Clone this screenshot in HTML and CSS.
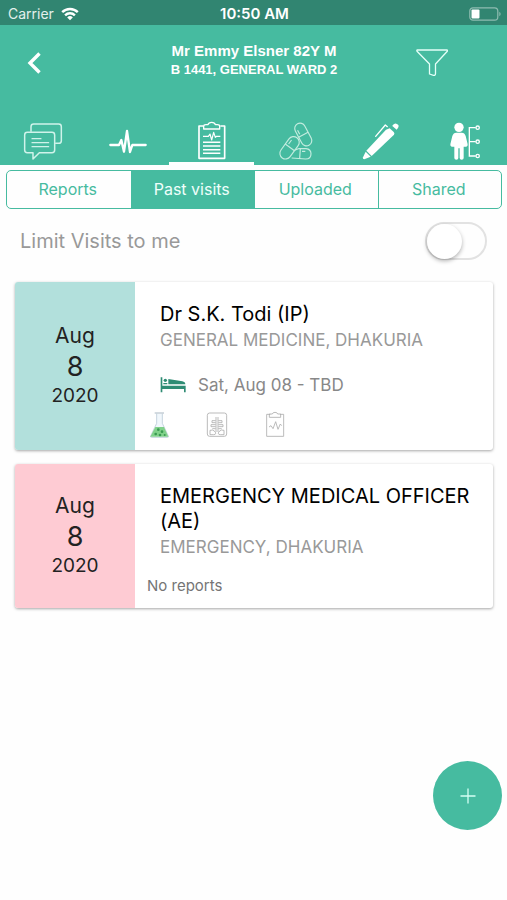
FILE: index.html
```html
<!DOCTYPE html>
<html lang="en">
<head>
<meta charset="utf-8">
<meta name="viewport" content="width=device-width, initial-scale=1">
<title>Past visits</title>
<link rel="stylesheet" href="styles.css">
</head>
<body>
<div class="status">
  <div class="carrier">
    <span>Carrier</span>
    <svg width="18" height="14" viewBox="0 0 18 14" fill="none" stroke="#fff" stroke-width="2.4">
      <path d="M1.2 5.2a11 11 0 0 1 15.600 0M4.100 8.300a7 7 0 0 1 9.800 0"/>
      <path d="M9 13.200 6.200 10.400a4 4 0 0 1 5.600 0z" fill="#fff" stroke="none"/>
    </svg>
  </div>
  <div class="clock">10:50 AM</div>
  <svg class="battery" width="32" height="14" viewBox="0 0 32 14">
    <rect x=".8" y=".8" width="28" height="12.400" rx="3.200" fill="none" stroke="#8fbcb1" stroke-width="1.200"/>
    <rect x="2.500" y="2.500" width="8" height="9" rx="1" fill="#fff"/>
    <path d="M30.300 4.800a2.500 2.500 0 0 1 0 4.400z" fill="#8fbcb1"/>
  </svg>
</div>

<header class="header">
  <div class="bar">
    <button class="icon-btn" type="button" aria-label="Back">
      <svg width="16" height="24" viewBox="0 0 16 24" fill="none" stroke="#fff" stroke-width="3.400"><path d="M13.500 2.500 4 12l9.500 9.500"/></svg>
    </button>
    <h1 class="patient">
      <span class="patient-name">Mr Emmy Elsner 82Y M</span>
      <span class="patient-ward">B 1441, GENERAL WARD 2</span>
    </h1>
    <button class="icon-btn" type="button" aria-label="Filter">
      <svg width="34" height="30" viewBox="0 0 34 30" fill="none" stroke="#e4fff8" stroke-width="1.300" stroke-linejoin="round"><path d="M2.300 2h29.600q.8 0 .4 1.200L20.500 16v9.500q0 2-2 1.800L14.500 26v-10L2 3.200Q1.500 2 2.300 2z"/></svg>
    </button>
  </div>
  <nav class="tabs">
    <a class="tab" href="#" aria-label="Messages">
      <svg viewBox="0 0 120 120" fill="none" stroke="#d0f3ea" stroke-width="4.500" stroke-linejoin="round" stroke-linecap="round">
        <path d="M27 31V17q0-8 8-8h75q8 0 8 8v42q0 8-8 8h-9"/>
        <path d="M16 34h74q8 0 8 8v45q0 8-8 8H52L33 114V95H16q-8 0-8-8V42q0-8 8-8z"/>
        <path d="M30 53h27M30 65h50M30 77h50" stroke-width="3.500"/>
      </svg>
    </a>
    <a class="tab" href="#" aria-label="Vitals">
      <svg viewBox="0 0 120 120" fill="none" stroke="#fff" stroke-width="7" stroke-linejoin="round" stroke-linecap="round"><path d="M10 72h26l7-15 8 35 9-62 9 63 7-21h40"/></svg>
    </a>
    <a class="tab tab-active" href="#" aria-label="Visits">
      <svg viewBox="0 0 120 120" fill="none" stroke="#fff" stroke-width="5" stroke-linejoin="round">
        <path d="M36 15H24v97h77V15H88"/>
        <path d="M38 24v-8q0-5 7-5h6q2-7 11-7t11 7h6q7 0 7 5v8z" stroke-width="4"/>
        <path d="M36 46h16l5-7 5 18 6-23 5 15 4-3h11" stroke-width="3.500"/>
        <path d="M36 64h52M36 75h52M36 86h52M36 97h52" stroke-width="4.500"/>
      </svg>
    </a>
    <a class="tab" href="#" aria-label="Medication">
      <svg viewBox="0 0 120 120" fill="none" stroke="#c3ecdf" stroke-width="3.500">
        <g transform="rotate(-28 82 41)"><rect x="66" y="4" width="32" height="73" rx="16"/><path d="M66 41h32M73 21v14"/></g>
        <g transform="rotate(36 41 80)"><rect x="24" y="43" width="34" height="75" rx="17"/><path d="M24 79h34M32 58v15"/></g>
        <path d="M67 83h23q15 2 15 15 0 16-16 16l-42-3M73 83l-2 29M56 88l11-5M78 91h10"/>
      </svg>
    </a>
    <a class="tab" href="#" aria-label="Notes">
      <svg viewBox="0 0 120 120" fill="#fff">
        <path d="M89 22l12 11q4 4 1 8L35 105 19 89 78 26z"/>
        <path d="M17 92l15 15-19 8q-6 0-4-6z"/>
        <path d="M98 13q8-11 17-1 3 5-5 14L97 15z"/>
        <path d="M82 17l-6-5-29 34" fill="none" stroke="#fff" stroke-width="4" stroke-linecap="round" stroke-linejoin="round"/>
      </svg>
    </a>
    <a class="tab" href="#" aria-label="Care team">
      <svg viewBox="0 0 120 120" fill="#fff">
        <circle cx="42" cy="19" r="14"/>
        <path d="M34 35h16q9 0 12 10l6 25q1 6-4 7h-8v34q0 5-6 5t-6-5V82h-4v29q0 5-6 5t-6-5V77h-8q-5-1-4-7l6-25q3-10 12-10z"/>
        <g fill="none" stroke="#fff" stroke-width="4"><path d="M92 20H73v85h19M73 62h19"/><circle cx="98" cy="20" r="5"/><circle cx="98" cy="62" r="5"/><circle cx="98" cy="105" r="5"/></g>
      </svg>
    </a>
  </nav>
</header>

<main class="content">
  <div class="segments">
    <button class="segment" type="button">Reports</button>
    <button class="segment segment-on" type="button">Past visits</button>
    <button class="segment" type="button">Uploaded</button>
    <button class="segment" type="button">Shared</button>
  </div>

  <div class="limit">
    <label for="limit">Limit Visits to me</label>
    <input class="switch" id="limit" type="checkbox" role="switch">
  </div>

  <div class="visits">
    <article class="card">
      <time class="date" datetime="2020-08-08"><span>Aug</span><span class="day">8</span><span class="year">2020</span></time>
      <div class="info">
        <h2 class="name">Dr S.K. Todi (IP)</h2>
        <p class="dept">GENERAL MEDICINE, DHAKURIA</p>
        <p class="stay">
          <svg width="26" height="16" viewBox="0 0 78 48" fill="#2f8c74">
            <path d="M2 1h5v25h70v20h-5V36H7v10H2z"/>
            <circle cx="16" cy="10" r="5"/>
            <path d="M25 6l42 7q9 2 9 9H25zM10 18h12v4H10z"/>
          </svg>
          <span>Sat, Aug 08 - TBD</span>
        </p>
        <div class="reports">
          <svg viewBox="0 0 72 84">
            <path d="M29 8v29L11 75q-2 4 3 4h47q5 0 3-4L46 37V8" fill="#f1f7fc" stroke="#bccbd8" stroke-width="2.500"/>
            <path d="M23 6h28" stroke="#a9b7c2" stroke-width="3"/>
            <path d="M25 48h26l13 29H10z" fill="#80d18a"/>
            <g fill="#3a9b52"><circle cx="34" cy="56" r="4"/><circle cx="45" cy="62" r="4"/><circle cx="26" cy="69" r="4"/><circle cx="39" cy="72" r="4"/><circle cx="53" cy="72" r="3"/></g>
          </svg>
          <svg viewBox="0 0 72 84" fill="none" stroke="#adadad" stroke-width="2.500">
            <rect x="7" y="6" width="58" height="70" rx="7"/>
            <path d="M33 18v45M39 18v45M32 29H21v6h11M40 29h11v6H40M32 41H18v6h14M40 41h14v6H40M32 53H22M40 53h10M15 58q9-4 15 4t-4 9H15zM57 58q-9-4-15 4t4 9h11z"/>
          </svg>
          <svg viewBox="0 0 72 84" fill="none" stroke="#adadad" stroke-width="2.500">
            <path d="M22 10H11v66h51V10H51"/><path d="M19 19V9h9q1-5 8-5t8 5h9v10z"/>
            <path d="M18 48l6-4 6 9 8-21 7 23 7-16 4 5"/>
          </svg>
        </div>
      </div>
    </article>

    <article class="card">
      <time class="date date-emergency" datetime="2020-08-08"><span>Aug</span><span class="day">8</span><span class="year">2020</span></time>
      <div class="info">
        <h2 class="name">EMERGENCY MEDICAL OFFICER (AE)</h2>
        <p class="dept">EMERGENCY, DHAKURIA</p>
        <p class="empty">No reports</p>
      </div>
    </article>
  </div>
</main>

<button class="add" type="button" aria-label="Add">
  <svg width="16" height="16" viewBox="0 0 16 16" stroke="#d5fff4" stroke-width="1.300"><path d="M8 .5v15M.5 8h15"/></svg>
</button>
</body>
</html>
```
FILE: styles.css
```css
* { box-sizing: border-box; }

body {
  margin: 0;
  min-height: 100vh;
  background: #fefefe;
  color: #111;
  font-family: Inter, "Liberation Sans", sans-serif;
}

h1, h2, p { margin: 0; font-weight: 400; }
button { padding: 0; border: 0; background: none; font: inherit; cursor: pointer; }
svg { display: block; }

.status {
  display: grid;
  grid-template-columns: 1fr auto 1fr;
  align-items: center;
  height: 25px;
  padding: 2px 6px 0 8px;
  background: #318571;
  color: #fff;
  font-size: 14px;
}
.carrier { display: flex; align-items: center; gap: 7px; color: #e3f0ec; }
.clock { font-size: 15px; font-weight: 600; }
.battery { justify-self: end; }

.header { background: #46bba0; }
.bar {
  display: grid;
  grid-template-columns: 68px 1fr 68px;
  align-items: center;
  height: 92px;
  padding: 0 41px 16px 0;
}
.icon-btn { display: grid; place-items: center; height: 48px; }
.patient {
  padding: 0 0 6px 42px;
  color: #fff;
  font-family: "Liberation Sans", sans-serif;
  font-weight: 700;
  text-align: center;
}
.patient span { display: block; }
.patient-name { font-size: 15px; line-height: 20px; }
.patient-ward { font-size: 13px; line-height: 18px; }

.tabs { display: grid; grid-template-columns: repeat(6, 1fr); }
.tab {
  display: grid;
  place-items: center;
  height: 48px;
  border-bottom: 3px solid transparent;
  padding-top: 3px;
}
.tab svg { width: 40px; height: 40px; overflow: visible; }
.tab-active { border-color: #fff; }

.segments {
  display: grid;
  grid-template-columns: repeat(4, 1fr);
  margin: 5px 5px 0 6px;
  border: 1px solid #46bba0;
  border-radius: 5px;
  overflow: hidden;
}
.segment {
  height: 37px;
  padding: 0 2px 2px 0;
  color: #46bba0;
  font-size: 16px;
}
.segment + .segment { border-left: 1px solid #46bba0; }
.segment-on { background: #46bba0; color: #effffb; }

.limit {
  display: flex;
  align-items: center;
  justify-content: space-between;
  height: 73px;
  padding: 0 20px 9px 20px;
  color: #999;
  font-size: 20px;
}
.switch {
  appearance: none;
  width: 62px;
  height: 38px;
  margin: 0;
  border: 2px solid #e2e2e2;
  border-radius: 19px;
  background: #fefefe;
}
.switch::before {
  content: "";
  display: block;
  width: 35px;
  height: 35px;
  border-radius: 50%;
  background: #fff;
  box-shadow: 0 2px 4px rgba(0, 0, 0, .3);
}
.switch:checked::before { margin-left: auto; }

.visits { display: grid; gap: 14px; padding: 0 14px 0 15px; }
.card {
  display: grid;
  grid-template-columns: 120px 1fr;
  border-radius: 3px;
  overflow: hidden;
  background: #fff;
  box-shadow: 0 1px 3px rgba(0, 0, 0, .35);
}
.date {
  display: flex;
  flex-direction: column;
  align-items: center;
  justify-content: center;
  padding-bottom: 2px;
  background: #b2e0dc;
  color: #222;
  font-size: 21px;
  line-height: 30px;
}
.date-emergency { background: #fecbd3; }
.day { font-size: 27px; line-height: 32px; }
.year { font-size: 19px; line-height: 26px; }

.info { padding: 20px 12px 11px; }
.name { padding-left: 13px; color: #000; font-size: 20px; line-height: 25px; }
.dept { padding-left: 13px; color: #999; font-size: 17px; line-height: 26px; }
.stay {
  display: flex;
  align-items: center;
  gap: 12px;
  margin-top: 20px;
  padding-left: 13px;
  color: #888;
  font-size: 17px;
  line-height: 24px;
}
.reports { display: flex; gap: 34px; margin-top: 14px; }
.reports svg { width: 24px; height: 28px; }
.empty { margin-top: 15px; color: #757575; font-size: 15px; line-height: 22px; }

.add {
  position: fixed;
  right: 5px;
  bottom: 70px;
  display: grid;
  place-items: center;
  width: 69px;
  height: 69px;
  border-radius: 50%;
  background: #46bba0;
}
```
